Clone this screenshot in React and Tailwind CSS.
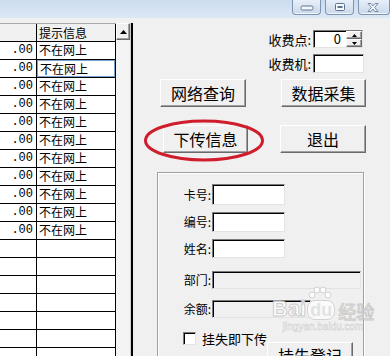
import React from "react";

const sunken =
  "border border-t-[#7a7a7a] border-l-[#7a7a7a] border-r-[#e3e3e3] border-b-[#e3e3e3] shadow-[inset_1px_1px_0_#000]";
const raised =
  "border border-t-white border-l-white border-r-[#6a6a6a] border-b-[#6a6a6a] shadow-[inset_-1px_-1px_0_#a0a0a0] bg-[#f0f0f0]";

function WinButton({ children, wide }) {
  return (
    <div
      className={`h-[15px] ${wide ? "w-[32px]" : "w-[29px]"} rounded-b-[4px] border border-t-0 border-[#7d94b3] bg-gradient-to-b from-[#e8eff8] to-[#c9d8ea] flex items-center justify-center shadow-[inset_0_-1px_0_#f3f7fc]`}
    >
      {children}
    </div>
  );
}

function TitleBar() {
  return (
    <div className="h-[18px] bg-gradient-to-b from-[#cbdcef] to-[#dde8f5] flex justify-end items-start pr-0 gap-[4px]">
      <WinButton>
        <svg width="14" height="8" viewBox="0 0 14 8">
          <rect x="1" y="3" width="12" height="4" rx="1.5" fill="#f4f7fb" stroke="#5d7290" />
        </svg>
      </WinButton>
      <WinButton>
        <svg width="12" height="10" viewBox="0 0 12 10">
          <rect x="1.5" y="1.5" width="9" height="7" rx="1" fill="#f4f7fb" stroke="#5d7290" />
          <rect x="3.5" y="4" width="5" height="2" fill="#5d7290" />
        </svg>
      </WinButton>
      <WinButton wide>
        <svg width="14" height="11" viewBox="0 0 14 11" className="-ml-[2px]">
          <path
            d="M2 1.5 L5 1.5 L7 4 L9 1.5 L12 1.5 L8.7 5.5 L12 9.5 L9 9.5 L7 7 L5 9.5 L2 9.5 L5.3 5.5 Z"
            fill="#f4f7fb"
            stroke="#6b7f9c"
            strokeWidth="0.9"
          />
        </svg>
      </WinButton>
    </div>
  );
}

function LeftGrid() {
  const data = Array.from({ length: 11 });
  const empty = Array.from({ length: 7 });
  return (
    <div className="w-[133px] pt-[5px] flex">
      <div className="w-[116px] bg-white">
        <div className="h-[19px] flex border-t border-t-[#a8a8a8] border-b border-black bg-[#f0f0f0]">
          <div className="w-[37px] border-r border-black" />
          <div className="w-[79px] border-r border-black text-[12px] leading-[17px] pl-[2px]">提示信息</div>
        </div>
        {data.map((_, i) => (
          <div key={i} className="h-[18px] flex border-b border-black">
            <div className="w-[37px] border-r border-black text-right pr-[3px] text-[12px] leading-[17px] font-['Liberation_Mono',monospace]">
              .00
            </div>
            <div className="w-[79px] border-r border-black">
              <div
                className={`h-[17px] text-[12px] leading-[16px] pl-[2px] ${
                  i === 1 ? "border border-[#7ba1cf] pl-[1px]" : ""
                }`}
              >
                不在网上
              </div>
            </div>
          </div>
        ))}
        {empty.map((_, i) => (
          <div key={i} className="h-[18px] flex border-b border-black">
            <div className="w-[37px] border-r border-black" />
            <div className="w-[79px] border-r border-black" />
          </div>
        ))}
      </div>
      <div className="w-[15px] flex flex-col bg-[#f4f4f4] border-r border-r-[#cfcfcf]">
        <div className={`h-[17px] flex items-center justify-center ${raised}`}>
          <svg width="7" height="4" viewBox="0 0 7 4">
            <path d="M0 4 L3.5 0 L7 4 Z" fill="#000" />
          </svg>
        </div>
      </div>
      <div className="w-[2px] bg-black mt-[0px]" />
    </div>
  );
}

function Btn({ children, className }) {
  return (
    <div
      className={`h-[28px] flex items-center justify-center text-[16px] leading-none ${raised} ${className}`}
    >
      {children}
    </div>
  );
}

function Field({ label, w, disabled, h }) {
  return (
    <div className="flex items-center">
      <div className="w-[54px] text-right text-[12px] leading-none pr-[1px]">{label}:</div>
      <div className={`${w} ${h} ${disabled ? "bg-[#f0f0f0]" : "bg-white"} ${sunken}`} />
    </div>
  );
}

function RightPanel() {
  return (
    <div className="flex-1 flex flex-col text-black">
      <div className="mt-[12px] flex items-center justify-end pr-[27px] gap-[2px]">
        <span className="text-[13px] leading-none">收费点:</span>
        <div className={`w-[50px] h-[18px] flex bg-white ${sunken}`}>
          <span className="flex-1 text-right pr-[5px] text-[13px] leading-[16px]">0</span>
          <div className="w-[16px] flex flex-col">
            <div className={`flex-1 flex items-center justify-center ${raised}`}>
              <svg width="5" height="3" viewBox="0 0 5 3">
                <path d="M0 3 L2.5 0 L5 3 Z" fill="#000" />
              </svg>
            </div>
            <div className={`flex-1 flex items-center justify-center ${raised}`}>
              <svg width="5" height="3" viewBox="0 0 5 3">
                <path d="M0 0 L2.5 3 L5 0 Z" fill="#000" />
              </svg>
            </div>
          </div>
        </div>
      </div>
      <div className="mt-[6px] flex items-center justify-end pr-[26px] gap-[2px]">
        <span className="text-[13px] leading-none">收费机:</span>
        <div className={`w-[51px] h-[19px] bg-white ${sunken}`} />
      </div>

      <div className="mt-[6px] flex pl-[27px] gap-[35px]">
        <Btn className="w-[86px]">网络查询</Btn>
        <Btn className="w-[85px]">数据采集</Btn>
      </div>
      <div className="mt-[18px] flex pl-[30px] gap-[32px]">
        <Btn className="w-[85px]">下传信息</Btn>
        <Btn className="w-[86px]">退出</Btn>
      </div>

      <div className="mt-[19px] ml-[24px] w-[207px] h-[220px] border border-[#a0a0a0] shadow-[inset_1px_1px_0_#fff,1px_1px_0_#fff] flex flex-col">
        <div className="mt-[11px]">
          <Field label="卡号" w="w-[73px]" h="h-[21px]" />
        </div>
        <div className="mt-[7px]">
          <Field label="编号" w="w-[73px]" h="h-[20px]" />
        </div>
        <div className="mt-[7px]">
          <Field label="姓名" w="w-[73px]" h="h-[19px]" />
        </div>
        <div className="mt-[13px]">
          <Field label="部门" w="w-[149px]" h="h-[18px]" disabled />
        </div>
        <div className="mt-[11px]">
          <Field label="余额" w="w-[99px]" h="h-[18px]" disabled />
        </div>
        <div className="mt-[14px] flex items-center pl-[25px] gap-[6px]">
          <div className={`w-[13px] h-[13px] bg-white ${sunken}`} />
          <span className="text-[13px] leading-none">挂失即下传</span>
        </div>
        <div className="mt-[-3px] ml-[109px]">
          <Btn className="w-[86px] items-start pt-[4px]">挂失登记</Btn>
        </div>
      </div>
    </div>
  );
}

function Watermark() {
  return (
    <div className="absolute left-[272px] top-[298px] flex flex-col items-center opacity-90 pointer-events-none">
      <div className="flex items-end">
        <span className="text-[22px] font-bold leading-none text-white [-webkit-text-stroke:1px_#c9c9c9] font-['Liberation_Sans',sans-serif]">
          Bai
        </span>
        <div className="relative ml-[1px]">
          <svg width="26" height="14" viewBox="0 0 26 14" className="absolute left-[0px] -top-[14px]">
            <circle cx="5" cy="9" r="3" fill="#fff" stroke="#cfcfcf" />
            <circle cx="10" cy="4" r="3" fill="#fff" stroke="#cfcfcf" />
            <circle cx="16" cy="4" r="3" fill="#fff" stroke="#cfcfcf" />
            <circle cx="21" cy="9" r="3" fill="#fff" stroke="#cfcfcf" />
          </svg>
          <div className="rounded-[8px] bg-white/80 border border-[#d0d0d0] px-[2px] text-[18px] font-bold leading-[18px] text-[#e2e2e2] font-['Liberation_Sans',sans-serif]">
            du
          </div>
        </div>
        <span className="ml-[3px] text-[18px] leading-none text-white [-webkit-text-stroke:1px_#c9c9c9]">经验</span>
      </div>
      <span className="mt-[2px] text-[10px] leading-none text-white [-webkit-text-stroke:0.5px_#cdcdcd] font-['Liberation_Sans',sans-serif]">
        jingyan.baidu.com
      </span>
    </div>
  );
}

export default function App() {
  return (
    <div className="relative w-[390px] h-[356px] overflow-hidden bg-[#f0f0f0] font-['SimSun','Noto_Sans_CJK_SC',sans-serif] text-black">
      <TitleBar />
      <div className="flex h-[338px]">
        <LeftGrid />
        <RightPanel />
      </div>
      <svg className="absolute left-[143px] top-[118px]" width="122" height="45" viewBox="0 0 122 45">
        <ellipse cx="61" cy="22.5" rx="58.5" ry="19.5" fill="none" stroke="#cf1d2b" strokeWidth="3" />
      </svg>
      <Watermark />
    </div>
  );
}
